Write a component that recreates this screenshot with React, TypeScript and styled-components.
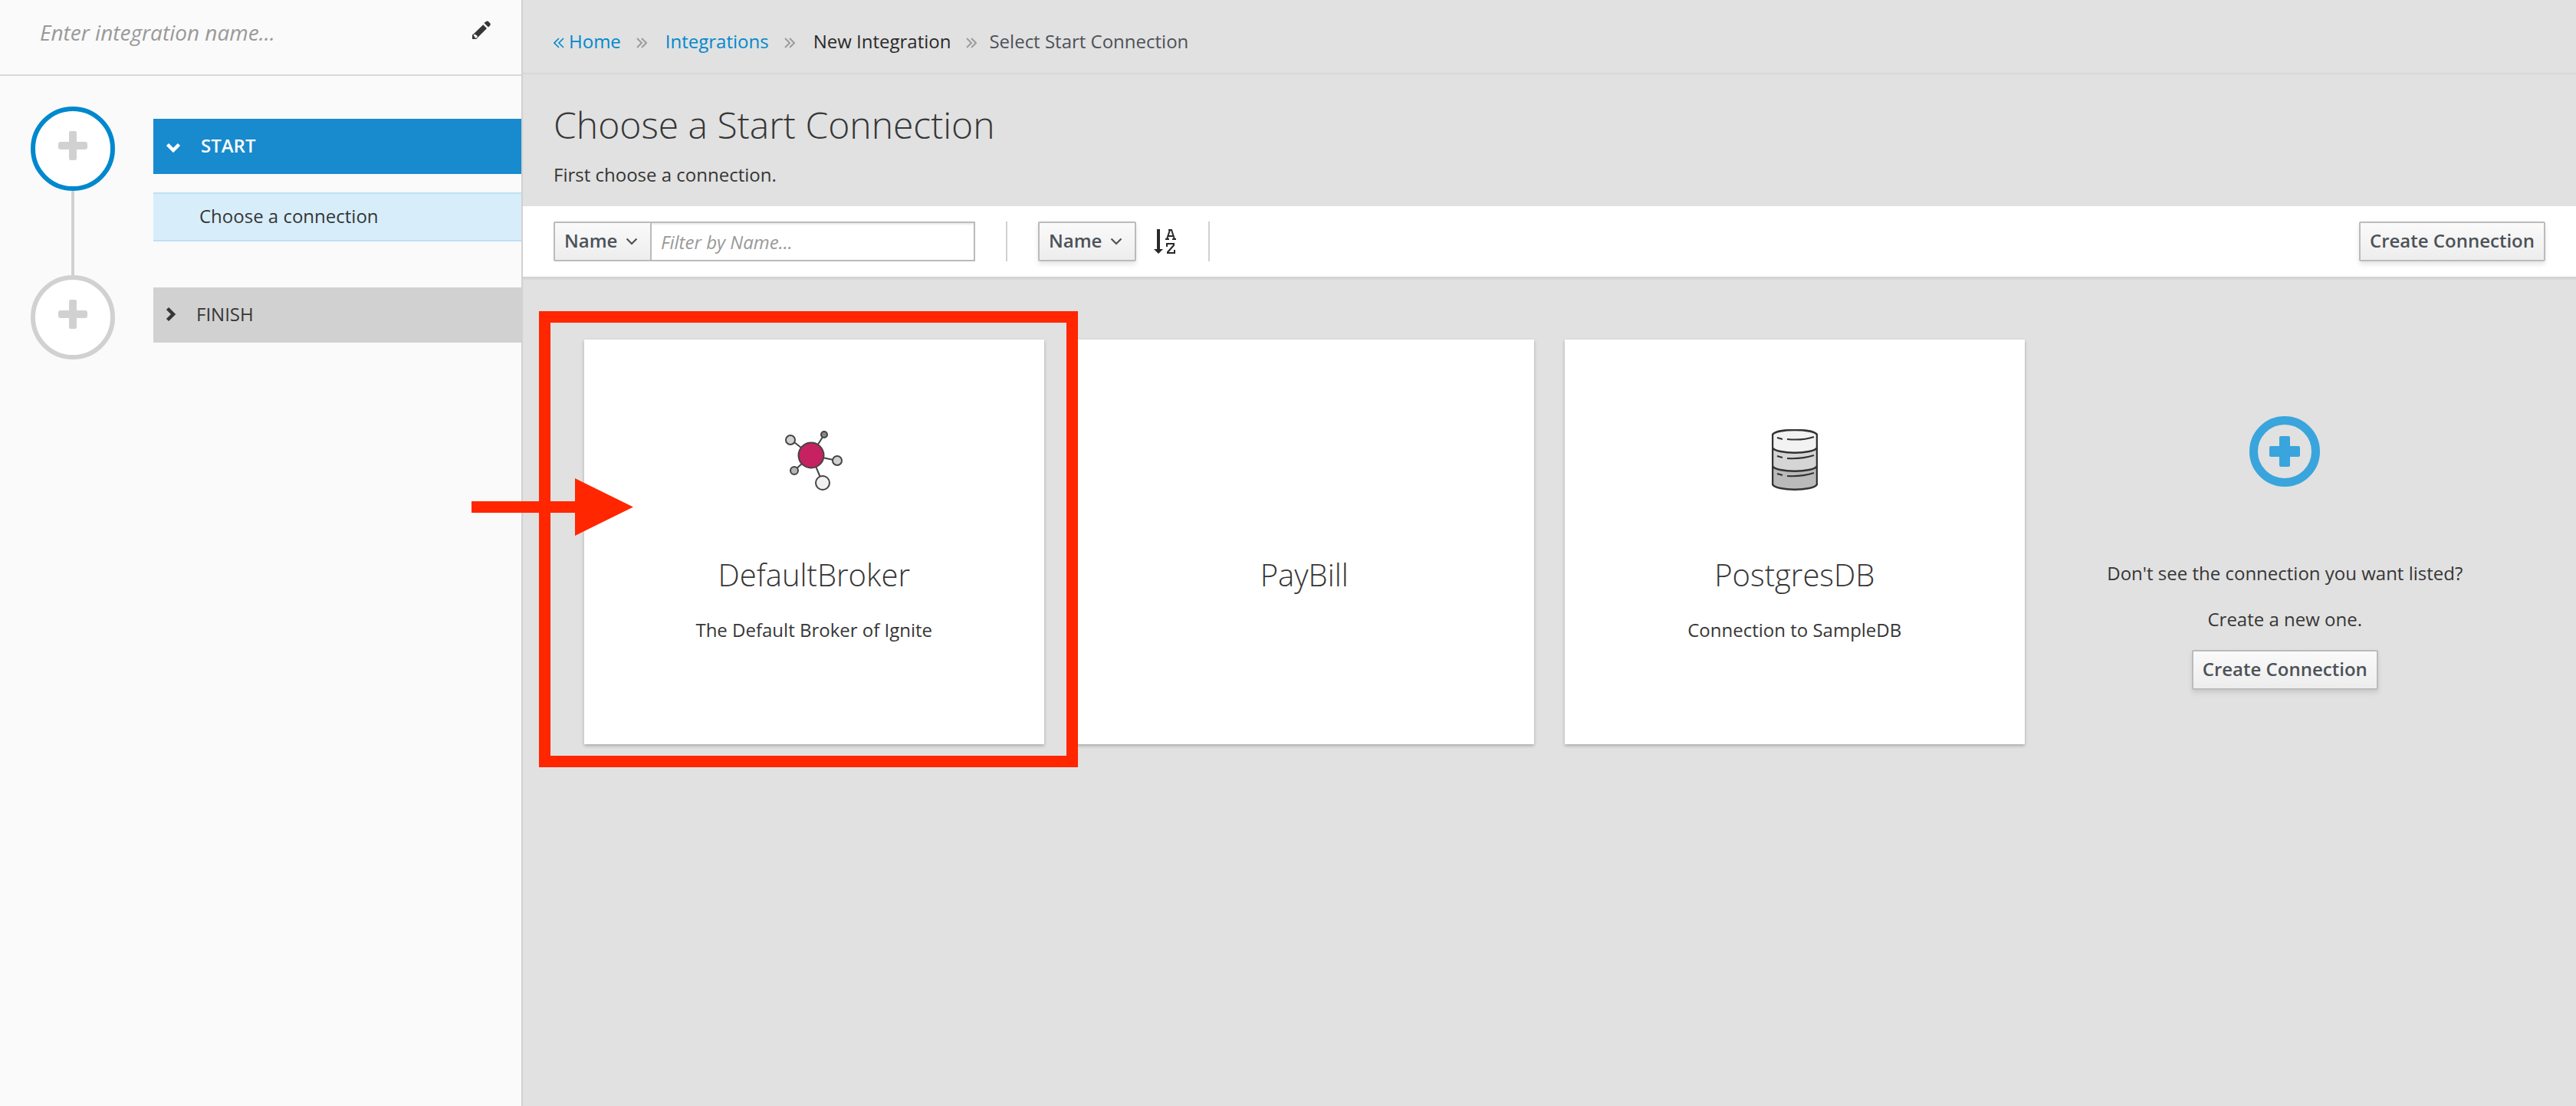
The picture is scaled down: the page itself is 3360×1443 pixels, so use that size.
import React from "react";
import styled, { createGlobalStyle } from "styled-components";

const GlobalStyle = createGlobalStyle`
  *, *::before, *::after { box-sizing: border-box; }
  body {
    margin: 0;
    background: #e1e1e1;
    color: #363636;
    font-family: "Open Sans", "Noto Sans", sans-serif;
    font-size: 24px;
    line-height: 40px;
  }
  h1, h2, p, ol, ul { margin: 0; padding: 0; font-weight: inherit; list-style: none; }
  button, input, select { font: inherit; color: inherit; margin: 0; border-radius: 0; }
  a { color: #0088ce; text-decoration: none; }
  svg { display: block; }
`;

const Page = styled.div`
  display: flex;
  min-height: 100vh;
`;

const Sidebar = styled.aside`
  flex: none;
  width: 682px;
  border-right: 2px solid #d1d1d1;
  background: #fafafa;
`;

const NameBar = styled.div`
  display: flex;
  align-items: flex-start;
  height: 99px;
  padding: 22px 40px 0 52px;
  border-bottom: 2px solid #d8d8d8;
`;

const NameInput = styled.input`
  flex: 1;
  min-width: 0;
  height: 40px;
  padding: 0;
  border: 0;
  background: none;
  font-size: 28px;
  &::placeholder { color: #999; font-style: italic; opacity: 1; }
`;

const IconButton = styled.button`
  display: block;
  flex: none;
  padding: 0;
  border: 0;
  background: none;
  cursor: pointer;
`;

const EditButton = styled(IconButton)`
  margin-top: 5px;
`;

const Steps = styled.div`
  display: flex;
  gap: 50px;
  padding: 40px 0 0 40px;
`;

const Track = styled.div`
  display: flex;
  flex: none;
  flex-direction: column;
  align-items: center;
  width: 110px;
`;

const StepCircle = styled.button<{ $active?: boolean }>`
  display: grid;
  place-items: center;
  width: 110px;
  height: 110px;
  padding: 0 0 8px;
  border: 6px solid ${(p) => (p.$active ? "#0088ce" : "#d1d1d1")};
  && { border-radius: 50%; }
  background: #fff;
`;

const TrackLine = styled.div`
  width: 4px;
  height: 110px;
  background: #d1d1d1;
`;

const StepList = styled.ol`
  flex: 1;
  padding-top: 16px;
`;

const StepHead = styled.button<{ $active?: boolean }>`
  display: flex;
  align-items: center;
  gap: 26px;
  width: 100%;
  height: 72px;
  padding: 0 16px 2px;
  border: 0;
  background: ${(p) => (p.$active ? "#188ace" : "#d1d1d1")};
  color: ${(p) => (p.$active ? "#fff" : "#363636")};
  font-weight: ${(p) => (p.$active ? 600 : 400)};
  text-align: left;
`;

const SubStep = styled.div`
  margin: 24px 0 60px;
  padding: 9px 60px 11px;
  border: solid #bee1f4;
  border-width: 2px 0;
  background: #d7eefa;
`;

const Main = styled.main`
  flex: 1;
  min-width: 0;
`;

const Breadcrumb = styled.nav`
  height: 97px;
  padding: 34px 40px 0;
  border-bottom: 2px solid #d8d8d8;
`;

const Crumbs = styled.ol`
  display: flex;
  align-items: center;
`;

const Crumb = styled.li<{ $last?: boolean }>`
  display: flex;
  align-items: center;
  color: ${(p) => (p.$last ? "#4d5258" : "#292929")};
`;

const Intro = styled.header`
  height: 172px;
  padding: 36px 40px 0;
`;

const Title = styled.h1`
  && { font-weight: 300; }
  font-size: 48px;
  line-height: 60px;
  margin-bottom: 15px;
`;

const Toolbar = styled.div`
  display: flex;
  align-items: center;
  padding: 20px 40px;
  background: #fff;
  box-shadow: 0 2px 0 #d1d1d1, 0 4px 0 #d8d8d8;
`;

const Group = styled.div`
  display: flex;
  align-items: center;
`;

const Divider = styled.div`
  width: 2px;
  height: 52px;
  margin: 0 40px;
  background: #d1d1d1;
`;

const SelectBox = styled.div<{ $flat?: boolean }>`
  position: relative;
  box-shadow: ${(p) => (p.$flat ? "none" : "0 4px 6px rgba(3, 3, 3, 0.1)")};
  border-radius: 2px;
  svg { position: absolute; right: 18px; top: 21px; color: #4d5258; pointer-events: none; }
`;

const Select = styled.select`
  appearance: none;
  display: block;
  width: 128px;
  height: 52px;
  padding: 0 12px 2px;
  border: 2px solid #bbb;
  && { border-radius: 2px; }
  background: linear-gradient(#fafafa, #ededed);
  color: #4d5258;
  font-weight: 600;
`;

const FilterInput = styled.input`
  width: 424px;
  height: 52px;
  margin-left: -2px;
  padding: 0 12px;
  border: 2px solid #bbb;
  background: #fff;
  box-shadow: inset 0 2px 2px rgba(3, 3, 3, 0.075);
  &::placeholder { color: #999; font-style: italic; opacity: 1; }
`;

const Button = styled.button`
  height: 52px;
  padding: 0 12px 2px;
  border: 2px solid #bbb;
  && { border-radius: 2px; }
  background: linear-gradient(#fafafa, #ededed);
  box-shadow: 0 4px 6px rgba(3, 3, 3, 0.1);
  color: #4d5258;
  font-weight: 600;
  white-space: nowrap;
`;

const Push = styled.div`
  margin-left: auto;
`;

const SortButton = styled(IconButton)`
  margin-left: 22px;
`;

const Grid = styled.div`
  display: grid;
  grid-template-columns: repeat(4, minmax(0, 1fr));
  gap: 40px;
  padding: 82px 80px;
`;

const cardLayout = `
  display: flex;
  flex-direction: column;
  align-items: center;
  min-height: 528px;
  text-align: center;
`;

const Card = styled.article`
  ${cardLayout}
  position: relative;
  padding-top: 117px;
  background: #fff;
  box-shadow: 0 2px 4px rgba(3, 3, 3, 0.25);
`;

const CardIcon = styled.div`
  height: 162px;
`;

const CardTitle = styled.h2`
  && { font-weight: 300; }
  font-size: 40px;
  line-height: 56px;
  margin-bottom: 24px;
`;

const NewCard = styled.section`
  ${cardLayout}
  padding-top: 100px;
`;

const NewIcon = styled.div`
  height: 185px;
`;

const NewText = styled.p`
  margin-bottom: 20px;
`;

const Highlight = styled.div`
  position: absolute;
  z-index: 1;
  inset: -37px -44px -30px -59px;
  border: 15px solid #ff2600;
  pointer-events: none;
`;

const Pointer = styled.svg`
  position: absolute;
  z-index: 2;
  left: -147px;
  top: 181px;
  pointer-events: none;
`;

const Plus = () => (
  <svg width="38" height="38" viewBox="0 0 38 38" aria-hidden="true">
    <path
      fill="#d1d1d1"
      d="M16 0h6q2 0 2 3v11h11q3 0 3 3v4q0 3-3 3H24v11q0 3-2 3h-6q-2 0-2-3V24H3q-3 0-3-3v-4q0-3 3-3h11V3q0-3 2-3z"
    />
  </svg>
);

const Pencil = () => (
  <svg width="24" height="24" viewBox="0 0 24 24" aria-hidden="true">
    <path
      fill="#363636"
      fillRule="evenodd"
      d="M18 1q1.500-1.200 3 0l2.200 2.200q1.200 1.500 0 3L21 8.500 15.500 3zM14.200 5.200l4.800 4.800L6.500 22.500 5.500 24H0v-5.500l1.500-1zM2.500 18l-1 1.500 1.500 1 .5 2 2 .3 1.200-1.800-.4-1.800-1.800-.4-.4-1.200z"
    />
  </svg>
);

const Chevron = () => (
  <svg width="16" height="10" viewBox="0 0 16 10" aria-hidden="true">
    <path d="M1.500 1.500 8 8l6.500-6.500" fill="none" stroke="currentColor" strokeWidth="2.200" />
  </svg>
);

const StepDownIcon = styled.svg`
  margin-top: 6px;
`;

const StepDown = () => (
  <StepDownIcon width="20" height="14" viewBox="0 0 20 14" aria-hidden="true">
    <path d="M2.500 2.500 10 10l7.500-7.500" fill="none" stroke="currentColor" strokeWidth="4.500" />
  </StepDownIcon>
);

const StepRight = () => (
  <svg width="14" height="20" viewBox="0 0 14 20" aria-hidden="true">
    <path d="M2.500 2.500 10 10l-7.500 7.500" fill="none" stroke="currentColor" strokeWidth="4.500" />
  </svg>
);

const CrumbArrow = styled.svg<{ $tight?: boolean }>`
  margin: 3px ${(p) => (p.$tight ? "16px" : "24px")} 0 20px;
`;

const BackArrow = styled.svg`
  margin: 3px 6px 0 0;
`;

const Separator = ({ tight }: { tight?: boolean }) => (
  <CrumbArrow $tight={tight} width="14" height="14" viewBox="0 0 14 14" aria-hidden="true">
    <path d="M1 1l6 6-6 6M7 1l6 6-6 6" fill="none" stroke="#9c9c9c" strokeWidth="2" />
  </CrumbArrow>
);

const SortIcon = () => (
  <svg width="32" height="34" viewBox="0 0 32 34" aria-hidden="true">
    <path fill="#292929" d="M5 1h4v26h4l-6 6-6-6h4z" />
    <path
      fill="none"
      stroke="#292929"
      strokeWidth="2"
      d="M16 14h5M25 14h5M18 14l4-12h2l4 12M19 10h8M20 2h4M18 24v-4h9v2l-8 9v1h9v-4"
    />
  </svg>
);

const BrokerIcon = () => (
  <svg width="76" height="80" viewBox="0 0 76 80" aria-hidden="true">
    <g stroke="#444" strokeWidth="2">
      <path fill="none" d="M8 14l26 20M51 7L34 34M34 34l34 7M34 34L12 54M34 34l15 36" />
      <circle cx="7" cy="14" r="6" fill="#d1d1d1" />
      <circle cx="51" cy="7" r="4" fill="#888" />
      <circle cx="68" cy="41" r="6" fill="#d1d1d1" />
      <circle cx="12" cy="54" r="5" fill="#b5b5b5" />
      <circle cx="49" cy="70" r="9" fill="#f1f1f1" />
      <circle cx="34" cy="34" r="16.500" fill="#c62160" />
    </g>
  </svg>
);

const DatabaseIcon = () => (
  <svg width="60" height="80" viewBox="0 0 60 80" aria-hidden="true">
    <g stroke="#333" strokeWidth="2.500">
      <path fill="#bababa" d="M1 50v22c5 9 53 9 58 0V50z" />
      <path fill="#d5d5d5" d="M1 26v22c5 9 53 9 58 0V26z" />
      <path fill="#f2f2f2" d="M1 7v17c5 9 53 9 58 0V7C54-1 6-1 1 7z" />
      <path
        fill="none"
        strokeWidth="2"
        d="M7 11l7 2M20 13q20 2 35-3M1 26v4M59 26v4M7 35l7 2M20 38q20 1 35-4M1 50v4M59 50v4M7 58l7 2M20 61q20 1 35-4"
      />
    </g>
  </svg>
);

const AddIcon = () => (
  <svg width="92" height="92" viewBox="0 0 92 92" aria-hidden="true">
    <circle cx="46" cy="46" r="40.500" fill="none" stroke="#39a5dc" strokeWidth="11" />
    <path
      fill="#39a5dc"
      d="M41 26h10q2 0 2 2v11h11q2 0 2 2v10q0 2-2 2H53v11q0 2-2 2H41q-2 0-2-2V53H28q-2 0-2-2V41q0-2 2-2h11V28q0-2 2-2z"
    />
  </svg>
);

const connections = [
  { name: "DefaultBroker", description: "The Default Broker of Ignite", icon: <BrokerIcon />, highlighted: true },
  { name: "PayBill", description: "", icon: null, highlighted: false },
  { name: "PostgresDB", description: "Connection to SampleDB", icon: <DatabaseIcon />, highlighted: false },
];

export default function App() {
  return (
    <>
      <GlobalStyle />
      <Page>
        <Sidebar>
          <NameBar>
            <NameInput aria-label="Integration name" placeholder="Enter integration name..." />
            <EditButton aria-label="Edit name">
              <Pencil />
            </EditButton>
          </NameBar>
          <Steps>
            <Track>
              <StepCircle $active aria-label="Add start connection">
                <Plus />
              </StepCircle>
              <TrackLine />
              <StepCircle aria-label="Add finish connection">
                <Plus />
              </StepCircle>
            </Track>
            <StepList>
              <li>
                <StepHead $active>
                  <StepDown />
                  START
                </StepHead>
                <SubStep>Choose a connection</SubStep>
              </li>
              <li>
                <StepHead>
                  <StepRight />
                  FINISH
                </StepHead>
              </li>
            </StepList>
          </Steps>
        </Sidebar>
        <Main>
          <Breadcrumb aria-label="Breadcrumb">
            <Crumbs>
              <Crumb>
                <BackArrow width="14" height="14" viewBox="0 0 14 14" aria-hidden="true">
                  <path d="M7 1L1 7l6 6M13 1L7 7l6 6" fill="none" stroke="#0088ce" strokeWidth="1.600" />
                </BackArrow>
                <a href="#home">Home</a>
                <Separator />
              </Crumb>
              <Crumb>
                <a href="#integrations">Integrations</a>
                <Separator />
              </Crumb>
              <Crumb>
                New Integration
                <Separator tight />
              </Crumb>
              <Crumb $last>Select Start Connection</Crumb>
            </Crumbs>
          </Breadcrumb>
          <Intro>
            <Title>Choose a Start Connection</Title>
            <p>First choose a connection.</p>
          </Intro>
          <Toolbar>
            <Group>
              <SelectBox $flat>
                <Select aria-label="Filter field">
                  <option>Name</option>
                </Select>
                <Chevron />
              </SelectBox>
              <FilterInput aria-label="Filter by name" placeholder="Filter by Name..." />
            </Group>
            <Divider />
            <Group>
              <SelectBox>
                <Select aria-label="Sort field">
                  <option>Name</option>
                </Select>
                <Chevron />
              </SelectBox>
              <SortButton aria-label="Sort ascending">
                <SortIcon />
              </SortButton>
            </Group>
            <Divider />
            <Push>
              <Button>Create Connection</Button>
            </Push>
          </Toolbar>
          <Grid>
            {connections.map((c) => (
              <Card key={c.name}>
                <CardIcon>{c.icon}</CardIcon>
                <CardTitle>{c.name}</CardTitle>
                <p>{c.description}</p>
                {c.highlighted && (
                  <>
                    <Highlight />
                    <Pointer width="211" height="75" viewBox="0 0 211 75" aria-hidden="true">
                      <path fill="#ff2600" d="M0 30h135V0l76 37.500L135 75V45H0z" />
                    </Pointer>
                  </>
                )}
              </Card>
            ))}
            <NewCard>
              <NewIcon>
                <AddIcon />
              </NewIcon>
              <NewText>Don't see the connection you want listed?</NewText>
              <NewText>Create a new one.</NewText>
              <Button>Create Connection</Button>
            </NewCard>
          </Grid>
        </Main>
      </Page>
    </>
  );
}
